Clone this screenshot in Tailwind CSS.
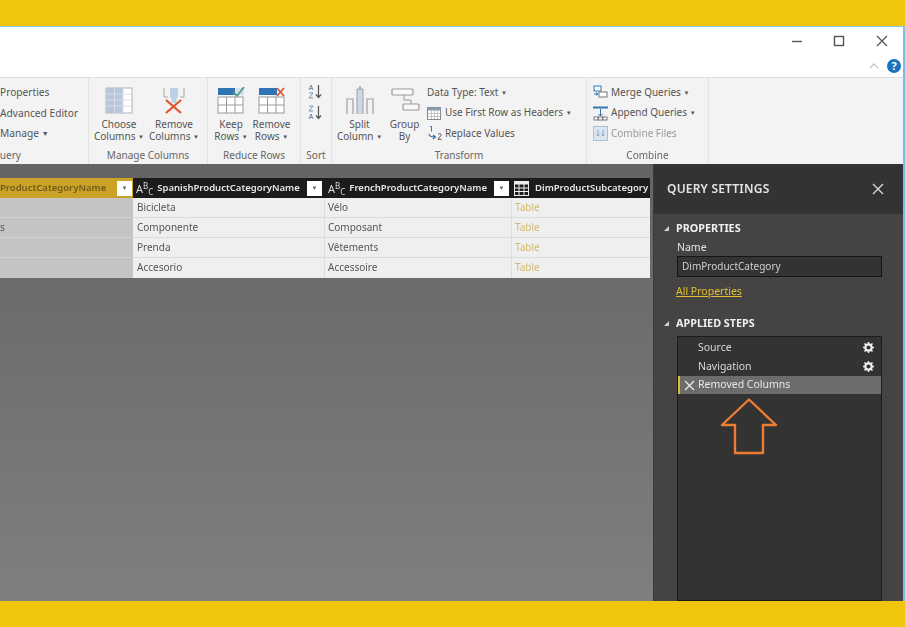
<!DOCTYPE html>
<html>
<head>
<meta charset="utf-8">
<script src="https://cdn.jsdelivr.net/npm/@tailwindcss/browser@4"></script>
</head>
<body class="bg-[#f1c50e]">
<div class="relative w-[905px] h-[627px] overflow-hidden flex flex-col font-['Noto_Sans',sans-serif] text-[10px] text-[#555] blur-[0.4px]">
  <!-- top band -->
  <div class="h-[26px] shrink-0 bg-[#f1c50e]"></div>

  <div class="flex-1 flex flex-col min-h-0 border-t border-t-[#8ccbe8] border-r-2 border-r-[#7dbfe0]">
    <!-- title bar -->
    <div class="h-[50px] shrink-0 bg-white flex flex-col">
      <div class="h-[27px] flex justify-end items-center pt-[1px]">
        <svg class="w-[12px] h-[12px] mr-[30px]" viewBox="0 0 12 12"><path d="M1 6.500h10" stroke="#555" stroke-width="1.400"/></svg>
        <svg class="w-[12px] h-[12px] mr-[31px]" viewBox="0 0 12 12"><rect x="1.500" y="1.500" width="9" height="9" fill="none" stroke="#555" stroke-width="1.400"/></svg>
        <svg class="w-[12px] h-[12px] mr-[15px]" viewBox="0 0 12 12"><path d="M1 1l10 10M11 1L1 11" stroke="#555" stroke-width="1.300"/></svg>
      </div>
      <div class="flex-1 flex justify-end items-center pt-[1px]">
        <svg class="w-[10px] h-[6px] mr-[8px]" viewBox="0 0 10 6"><path d="M1 5l4-4 4 4" fill="none" stroke="#c4c4c4" stroke-width="1.300"/></svg>
        <div class="w-[14px] h-[14px] mr-[2px] rounded-full bg-[#1a74bc] text-white text-[11px] font-bold leading-[14px] text-center">?</div>
      </div>
    </div>

    <!-- ribbon -->
    <div class="h-[87px] shrink-0 bg-[#f3f3f3] border-t border-t-[#dedede] flex">
      <!-- query -->
      <div class="w-[89px] shrink-0 flex flex-col border-r border-r-[#e2e2e2] overflow-hidden">
        <div class="flex-1 flex flex-col gap-[7.500px] pt-[8px] leading-[13px] text-[10.200px] whitespace-nowrap">
          <span>Properties</span>
          <span>Advanced Editor</span>
          <span>Manage <span class="text-[7px] align-[1px]">▼</span></span>
        </div>
        <div class="h-[16px] leading-[14px] text-[#666] ml-[-8px]">Query</div>
      </div>

      <!-- manage columns -->
      <div class="w-[119px] shrink-0 flex flex-col border-r border-r-[#e2e2e2]">
        <div class="flex-1 flex pl-[4px] gap-[3px]">
          <div class="w-[52px] flex flex-col items-center pt-[9px] leading-[12px] text-center whitespace-nowrap">
            <svg class="w-[28px] h-[27px] mb-[4px]" viewBox="0 0 28 27">
              <rect x="1" y="1" width="26" height="25" fill="#fff" stroke="#aeb4bb"/>
              <rect x="1" y="1" width="17" height="25" fill="#b9c7de"/>
              <path d="M1 7h26M1 13h26M1 19h26M9.500 1v25M18 1v25" stroke="#d9dee6"/>
            </svg>
            <span>Choose</span>
            <span>Columns <span class="text-[6px] align-[1px]">▼</span></span>
          </div>
          <div class="w-[52px] flex flex-col items-center pt-[9px] leading-[12px] text-center whitespace-nowrap">
            <svg class="w-[28px] h-[27px] mb-[4px]" viewBox="0 0 28 27">
              <path d="M4 1v9h4M24 1v9h-4" fill="none" stroke="#a8a8a8"/>
              <rect x="10" y="1" width="8" height="10" fill="#bcd0e6"/>
              <path d="M14 11v5" stroke="#bcd0e6" stroke-width="5"/>
              <path d="M6 13l15 13M21 13L6 26" stroke="#e0542c" stroke-width="2.200"/>
            </svg>
            <span>Remove</span>
            <span>Columns <span class="text-[6px] align-[1px]">▼</span></span>
          </div>
        </div>
        <div class="h-[16px] leading-[14px] text-center text-[#666]">Manage Columns</div>
      </div>

      <!-- reduce rows -->
      <div class="w-[93px] shrink-0 flex flex-col border-r border-r-[#e2e2e2]">
        <div class="flex-1 flex pl-[3px]">
          <div class="w-[40px] flex flex-col items-center pt-[9px] leading-[12px] text-center whitespace-nowrap">
            <svg class="w-[28px] h-[27px] mb-[4px]" viewBox="0 0 28 27">
              <rect x="1" y="1" width="26" height="7" fill="#2f75b5"/>
              <path d="M18 1h9v7h-9z" fill="#d5e0ea"/>
              <path d="M16 5l4 4 7-9" fill="none" stroke="#4f9a8a" stroke-width="1.800"/>
              <rect x="1" y="10" width="25" height="16" fill="#fff" stroke="#9a9a9a"/>
              <path d="M1 18h25M9.500 10v16M18 10v16" stroke="#9a9a9a"/>
            </svg>
            <span>Keep</span>
            <span>Rows <span class="text-[6px] align-[1px]">▼</span></span>
          </div>
          <div class="w-[41px] flex flex-col items-center pt-[9px] leading-[12px] text-center whitespace-nowrap">
            <svg class="w-[28px] h-[27px] mb-[4px]" viewBox="0 0 28 27">
              <rect x="1" y="1" width="18" height="7" fill="#2f75b5"/>
              <path d="M19 1l7 8M26 1l-7 8" stroke="#e0542c" stroke-width="1.800"/>
              <rect x="1" y="10" width="25" height="16" fill="#fff" stroke="#9a9a9a"/>
              <path d="M1 18h25M9.500 10v16M18 10v16" stroke="#9a9a9a"/>
            </svg>
            <span>Remove</span>
            <span>Rows <span class="text-[6px] align-[1px]">▼</span></span>
          </div>
        </div>
        <div class="h-[16px] leading-[14px] text-center text-[#666]">Reduce Rows</div>
      </div>

      <!-- sort -->
      <div class="w-[31px] shrink-0 flex flex-col border-r border-r-[#e2e2e2]">
        <div class="flex-1 flex flex-col items-center gap-[6px] pt-[6px] pr-[2px]">
          <svg class="w-[15px] h-[15px]" viewBox="0 0 15 15">
            <path d="M3 1L1 6M3 1l2 5M1.500 4.500h3M1 9h4L1 14h4" fill="none" stroke="#7a8fb0"/>
            <path d="M10.500 1v12M8 10.500l2.500 3 2.500-3" fill="none" stroke="#555" stroke-width="1.200"/>
          </svg>
          <svg class="w-[15px] h-[15px]" viewBox="0 0 15 15">
            <path d="M1 1h4L1 6h4M3 9l-2 5M3 9l2 5M1.500 12.500h3" fill="none" stroke="#7a8fb0"/>
            <path d="M10.500 1v12M8 10.500l2.500 3 2.500-3" fill="none" stroke="#555" stroke-width="1.200"/>
          </svg>
        </div>
        <div class="h-[16px] leading-[14px] text-center text-[#666]">Sort</div>
      </div>

      <!-- transform -->
      <div class="w-[255px] shrink-0 flex flex-col border-r border-r-[#e2e2e2]">
        <div class="flex-1 flex pl-[5px]">
          <div class="w-[45px] flex flex-col items-center pt-[7px] leading-[12px] text-center whitespace-nowrap">
            <svg class="w-[28px] h-[30px] mb-[3px]" viewBox="0 0 28 30">
              <path d="M1 29V14h6v15M21 29V14h6v15" fill="none" stroke="#a0a0a0" stroke-width="1.200"/>
              <path d="M11 29V4h6v25" fill="#c9d7e8" stroke="#a0a0a0"/>
              <path d="M14 1v3" stroke="#a0b4cc" stroke-width="2"/>
            </svg>
            <span>Split</span>
            <span>Column <span class="text-[6px] align-[1px]">▼</span></span>
          </div>
          <div class="w-[45px] flex flex-col items-center pt-[7px] leading-[12px] text-center whitespace-nowrap">
            <svg class="w-[30px] h-[30px] mb-[3px]" viewBox="0 0 30 30">
              <rect x="2" y="4" width="21" height="6" rx="1" fill="#f8f8f8" stroke="#999" stroke-width="1.200"/>
              <rect x="13" y="19" width="16" height="6" rx="1" fill="#f8f8f8" stroke="#999" stroke-width="1.200"/>
              <path d="M14 10v5h7v4" fill="none" stroke="#999"/>
            </svg>
            <span>Group</span>
            <span>By</span>
          </div>
          <div class="flex flex-col gap-[7.500px] pt-[8px] leading-[13px] whitespace-nowrap">
            <span class="h-[13px]">Data Type: Text <span class="text-[6px] align-[1px]">▼</span></span>
            <span class="h-[13px] flex items-center gap-[4px]">
              <svg class="w-[14px] h-[13px]" viewBox="0 0 14 13">
                <rect x="0.500" y="0.500" width="13" height="12" fill="#fff" stroke="#888"/>
                <rect x="0.500" y="0.500" width="13" height="3" fill="#8a9bb0"/>
                <path d="M1 6.500h12M1 9.500h12M4.500 4v8M7.500 4v8M10.500 4v8" stroke="#b5b5b5" stroke-width="0.800"/>
              </svg>
              <span>Use First Row as Headers <span class="text-[6px] align-[1px]">▼</span></span>
            </span>
            <span class="h-[13px] flex items-center gap-[2px]">
              <svg class="w-[16px] h-[15px] shrink-0" viewBox="0 0 16 15">
                <path d="M3 0.500h1.500v5" fill="none" stroke="#3574b5"/>
                <path d="M2 8c0 3 3 3 6 3M6 9l2.500 2L6 13" fill="none" stroke="#3574b5" stroke-width="1.200"/>
                <path d="M11 8.500c1-1.500 3.500-1 3 .8-.3 1-2 2-3 4h3.500" fill="none" stroke="#555"/>
              </svg>
              <span>Replace Values</span>
            </span>
          </div>
        </div>
        <div class="h-[16px] leading-[14px] text-center text-[#666]">Transform</div>
      </div>

      <!-- combine -->
      <div class="w-[122px] shrink-0 flex flex-col border-r border-r-[#e2e2e2]">
        <div class="flex-1 flex flex-col gap-[7.500px] pt-[8px] pl-[6px] leading-[13px] whitespace-nowrap">
          <span class="h-[13px] flex items-center gap-[3px]">
            <svg class="w-[15px] h-[15px] shrink-0" viewBox="0 0 15 15">
              <rect x="1" y="1" width="7" height="5" fill="#fff" stroke="#3574b5"/>
              <rect x="6" y="7" width="8" height="5" fill="#fff" stroke="#777"/>
              <path d="M1 9h4M3 7.500L5 9l-2 1.500" fill="none" stroke="#3574b5"/>
            </svg>
            <span>Merge Queries <span class="text-[6px] align-[1px]">▼</span></span>
          </span>
          <span class="h-[13px] flex items-center gap-[3px]">
            <svg class="w-[15px] h-[15px] shrink-0" viewBox="0 0 15 15">
              <path d="M0 1.500h15" stroke="#3574b5" stroke-width="2"/>
              <path d="M7.500 3v7M5.500 8l2 2 2-2" fill="none" stroke="#3574b5"/>
              <rect x="1" y="11" width="4" height="3" fill="#fff" stroke="#777"/>
              <rect x="5.500" y="11" width="4" height="3" fill="#fff" stroke="#777"/>
              <rect x="10" y="11" width="4" height="3" fill="#fff" stroke="#777"/>
            </svg>
            <span>Append Queries <span class="text-[6px] align-[1px]">▼</span></span>
          </span>
          <span class="h-[13px] flex items-center gap-[3px] text-[#999]">
            <svg class="w-[15px] h-[15px] shrink-0" viewBox="0 0 15 15">
              <rect x="0.500" y="0.500" width="14" height="14" fill="#dbe6f1" stroke="#a9c1d9"/>
              <path d="M5 4v6M3.500 8.500L5 10l1.500-1.500M10 4v6M8.500 8.500L10 10l1.500-1.500" fill="none" stroke="#8aa6c2"/>
            </svg>
            <span>Combine Files</span>
          </span>
        </div>
        <div class="h-[16px] leading-[14px] text-center text-[#666]">Combine</div>
      </div>
    </div>

    <!-- main -->
    <div class="flex-1 flex min-h-0">
      <!-- data grid -->
      <div class="w-[653px] shrink-0 bg-linear-to-b from-[#646464] to-[#7f7f7f] pt-[14px]">
        <div class="w-[650px] grid grid-cols-[133px_192px_187px_138px] grid-rows-[20px_20px_20px_20px_20px]">
          <div class="bg-[#c9a227] text-[#735c17] text-[9.500px] font-semibold flex items-center justify-between pr-[1px] whitespace-nowrap">
            <span>ProductCategoryName</span>
            <span class="w-[15px] h-[15px] shrink-0 bg-white text-[#666] text-[6px] leading-[15px] text-center">▼</span>
          </div>
          <div class="bg-[#1c1c1c] text-[#e8e8e8] text-[9.500px] font-semibold flex items-center pl-[3px] pr-[3px] whitespace-nowrap">
            <span class="text-[#ddd] font-normal mr-[4px] text-[11px] leading-none">A<sup class="text-[8px]">B</sup><sub class="text-[8px]">C</sub></span>
            <span class="flex-1">SpanishProductCategoryName</span>
            <span class="w-[15px] h-[15px] shrink-0 bg-white text-[#666] text-[6px] leading-[15px] text-center">▼</span>
          </div>
          <div class="bg-[#1c1c1c] text-[#e8e8e8] text-[9.500px] font-semibold flex items-center pl-[3px] pr-[3px] whitespace-nowrap">
            <span class="text-[#ddd] font-normal mr-[4px] text-[11px] leading-none">A<sup class="text-[8px]">B</sup><sub class="text-[8px]">C</sub></span>
            <span class="flex-1">FrenchProductCategoryName</span>
            <span class="w-[15px] h-[15px] shrink-0 bg-white text-[#666] text-[6px] leading-[15px] text-center">▼</span>
          </div>
          <div class="bg-[#1c1c1c] text-[#e8e8e8] text-[9.500px] font-semibold flex items-center pl-[2px] whitespace-nowrap overflow-hidden">
            <svg class="w-[15px] h-[15px] mr-[6px] shrink-0" viewBox="0 0 15 15">
              <rect x="0.500" y="0.500" width="14" height="14" fill="#1c1c1c" stroke="#eee"/>
              <rect x="0.500" y="0.500" width="14" height="3" fill="#eee"/>
              <path d="M1 7h13M1 10.500h13M5 3v11M10 3v11" stroke="#eee"/>
            </svg>
            <span>DimProductSubcategory</span>
          </div>

          <div class="bg-[#c4c4c4] border-b border-b-[#d2d2d2]"></div>
          <div class="bg-[#efefef] border-b border-b-[#dcdcdc] border-r border-r-[#dcdcdc] pl-[4px] leading-[19px]">Bicicleta</div>
          <div class="bg-[#efefef] border-b border-b-[#dcdcdc] border-r border-r-[#dcdcdc] pl-[3px] leading-[19px]">Vélo</div>
          <div class="bg-[#efefef] border-b border-b-[#dcdcdc] pl-[3px] leading-[19px] text-[#d4bb70]">Table</div>

          <div class="bg-[#c4c4c4] border-b border-b-[#d2d2d2] leading-[19px]">s</div>
          <div class="bg-[#efefef] border-b border-b-[#dcdcdc] border-r border-r-[#dcdcdc] pl-[4px] leading-[19px]">Componente</div>
          <div class="bg-[#efefef] border-b border-b-[#dcdcdc] border-r border-r-[#dcdcdc] pl-[3px] leading-[19px]">Composant</div>
          <div class="bg-[#efefef] border-b border-b-[#dcdcdc] pl-[3px] leading-[19px] text-[#d4bb70]">Table</div>

          <div class="bg-[#c4c4c4] border-b border-b-[#d2d2d2]"></div>
          <div class="bg-[#efefef] border-b border-b-[#dcdcdc] border-r border-r-[#dcdcdc] pl-[4px] leading-[19px]">Prenda</div>
          <div class="bg-[#efefef] border-b border-b-[#dcdcdc] border-r border-r-[#dcdcdc] pl-[3px] leading-[19px]">Vêtements</div>
          <div class="bg-[#efefef] border-b border-b-[#dcdcdc] pl-[3px] leading-[19px] text-[#d4bb70]">Table</div>

          <div class="bg-[#c4c4c4]"></div>
          <div class="bg-[#efefef] border-r border-r-[#dcdcdc] pl-[4px] leading-[19px]">Accesorio</div>
          <div class="bg-[#efefef] border-r border-r-[#dcdcdc] pl-[3px] leading-[19px]">Accessoire</div>
          <div class="bg-[#efefef] pl-[3px] leading-[19px] text-[#d4bb70]">Table</div>
        </div>
      </div>

      <!-- query settings -->
      <div class="flex-1 flex flex-col min-w-0 bg-[#454442] text-[#e4e4e4] text-[10.500px] border-l border-l-[#3a3a3a]">
        <div class="h-[50px] shrink-0 bg-[#333333] flex items-center justify-between pl-[13px] pr-[19px]">
          <span class="text-[12px] font-semibold tracking-[0.2px]">QUERY SETTINGS</span>
          <svg class="w-[12px] h-[12px]" viewBox="0 0 12 12"><path d="M1 1l10 10M11 1L1 11" stroke="#ddd" stroke-width="1.300"/></svg>
        </div>
        <div class="flex-1 flex flex-col pl-[23px] pr-[21px] min-h-0">
          <div class="relative mt-[7px] ml-[-1px] text-[10.800px] font-bold leading-[14px] text-[#f0f0f0]">
            <span class="absolute left-[-12px] top-[5px] w-0 h-0 border-l-[5px] border-l-transparent border-b-[5px] border-b-[#d0d0d0]"></span>
            PROPERTIES
          </div>
          <div class="mt-[5px] leading-[14px]">Name</div>
          <div class="mt-[2px] h-[21px] bg-[#333] border border-[#151515] pl-[4px] text-[10px] leading-[19px] text-[#cfcfcf]">DimProductCategory</div>
          <div class="mt-[7px] ml-[-1px] leading-[14px] text-[#e2bf32] underline">All Properties</div>
          <div class="relative mt-[18px] ml-[-1px] text-[10.800px] font-bold leading-[14px] text-[#f0f0f0]">
            <span class="absolute left-[-12px] top-[5px] w-0 h-0 border-l-[5px] border-l-transparent border-b-[5px] border-b-[#d0d0d0]"></span>
            APPLIED STEPS
          </div>
          <div class="mt-[6px] flex-1 bg-[#333] border border-[#1c1c1c] pt-[1px] text-[#d8d8d8]">
            <div class="h-[19px] flex items-center justify-between pl-[20px] pr-[7px]">
              <span>Source</span>
              <svg class="w-[11px] h-[11px]" viewBox="0 0 11 11"><circle cx="5.500" cy="5.500" r="3.200" fill="none" stroke="#f0f0f0" stroke-width="2.200"/><path d="M5.500 0v2M5.500 9v2M0 5.500h2M9 5.500h2M1.500 1.500l1.400 1.400M8.100 8.100l1.400 1.400M9.500 1.500L8.100 2.900M2.900 8.100L1.500 9.500" stroke="#f0f0f0" stroke-width="1.500"/></svg>
            </div>
            <div class="h-[19px] flex items-center justify-between pl-[20px] pr-[7px]">
              <span>Navigation</span>
              <svg class="w-[11px] h-[11px]" viewBox="0 0 11 11"><circle cx="5.500" cy="5.500" r="3.200" fill="none" stroke="#f0f0f0" stroke-width="2.200"/><path d="M5.500 0v2M5.500 9v2M0 5.500h2M9 5.500h2M1.500 1.500l1.400 1.400M8.100 8.100l1.400 1.400M9.500 1.500L8.100 2.900M2.900 8.100L1.500 9.500" stroke="#f0f0f0" stroke-width="1.500"/></svg>
            </div>
            <div class="h-[18px] flex items-center bg-[#6c6c6c] border-l-2 border-l-[#d8c02c] pl-[4px]">
              <svg class="w-[11px] h-[11px] mr-[3px] shrink-0" viewBox="0 0 11 11"><path d="M1 1l9 9M10 1L1 10" stroke="#eee" stroke-width="1.200"/></svg>
              <span class="text-[#e6e6e6]">Removed Columns</span>
            </div>
          </div>
        </div>
      </div>
    </div>
  </div>

  <!-- bottom band -->
  <div class="h-[26px] shrink-0 bg-[#f1c50e]"></div>

  <!-- orange annotation arrow -->
  <svg class="absolute left-[720px] top-[397px] w-[58px] h-[58px]" viewBox="0 0 58 58">
    <path d="M29 2.500L56 28H43V56H15V28H2z" fill="none" stroke="#ee7d31" stroke-width="2.400" stroke-linejoin="round"/>
  </svg>
</div>
</body>
</html>
